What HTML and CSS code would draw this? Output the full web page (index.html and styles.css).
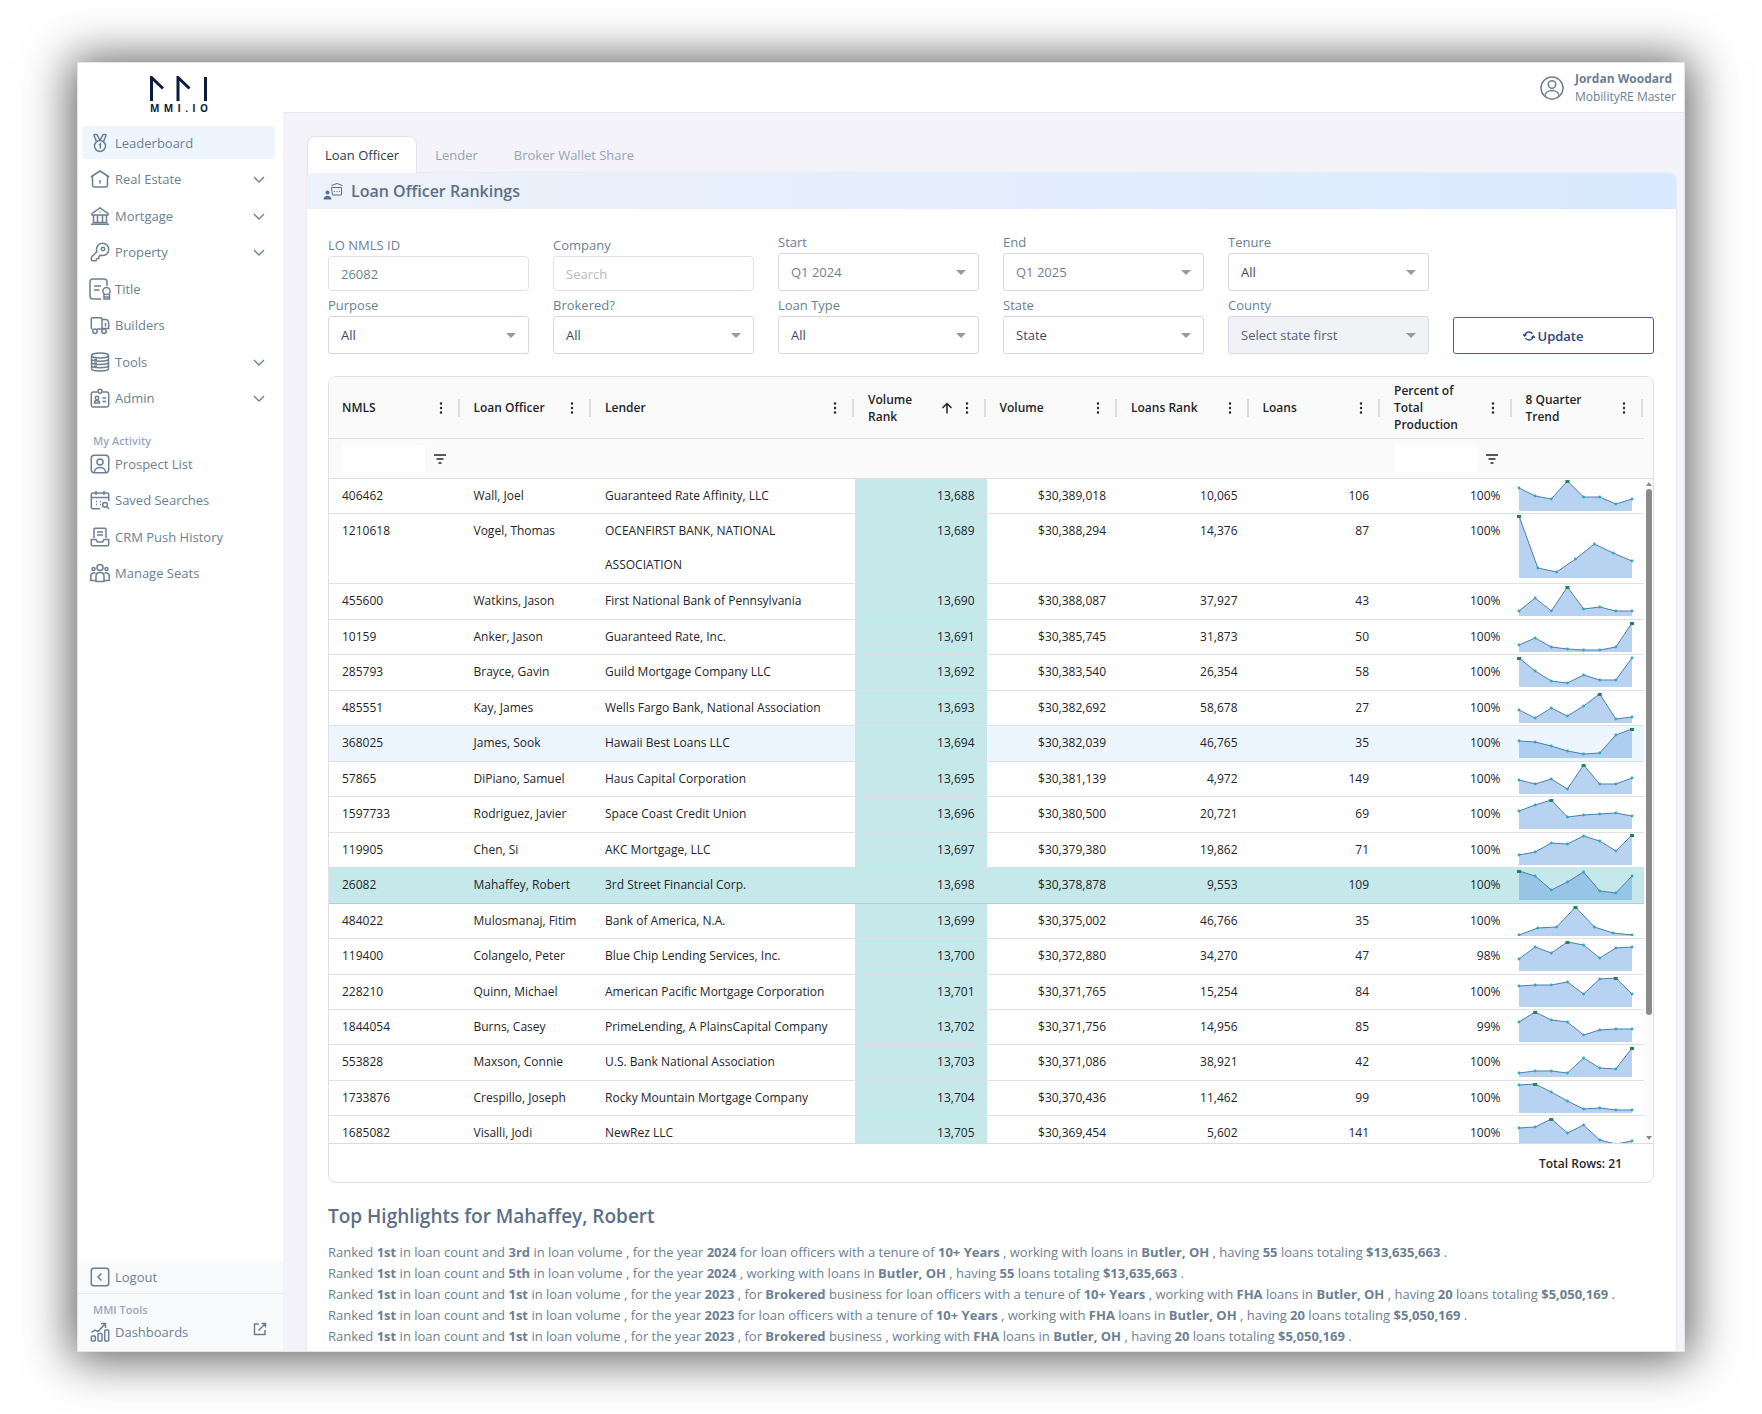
FILE: index.html
```html
<!DOCTYPE html>
<html lang="en">
<head>
    <meta charset="UTF-8">
    <meta name="viewport" content="width=device-width, initial-scale=1.0">
    <title>MMI - Loan Officer Rankings</title>
    <link rel="stylesheet" href="styles.css">
</head>
<body>

<!-- Shared icons -->
<svg class="sprite" aria-hidden="true">
    <symbol id="chevron" viewBox="0 0 12 12"><path d="M1 4l5 5 5-5"/></symbol>
    <symbol id="dots" viewBox="0 0 12 12"><circle cx="6" cy="1.500" r="1.200"/><circle cx="6" cy="6" r="1.200"/><circle cx="6" cy="10.500" r="1.200"/></symbol>
    <symbol id="filter" viewBox="0 0 14 12"><path d="M1 2h12M3.500 6h7M5.500 10h3"/></symbol>
</svg>

<div class="window">
    <aside class="sidebar">
        <a href="#" class="logo" aria-label="MMI.IO">
            <svg class="logo-mark" viewBox="0 0 58 25"><path d="M1.500 25V1.500L13 12.500M28 25V1.500L39.500 12.500M55.500 1v24"/></svg>
            <span class="logo-text"><span>M</span><span>M</span><span>I</span><span>.</span><span>I</span><span>O</span></span>
        </a>

        <nav class="nav nav-main">
            <a href="#" class="nav-item active">
                <svg class="icon" viewBox="0 0 20 20"><circle cx="10" cy="13" r="5.500"/><path d="M6.500 8.500L4 2.500q-.3-1 .7-1h1.600q.7 0 1 .7L10 7.500M13.500 8.500L16 2.500q.3-1-.7-1h-1.600q-.7 0-1 .7L10 7.500M9 12l1.300-1v4.500"/></svg>
                <span>Leaderboard</span>
            </a>
            <a href="#" class="nav-item">
                <svg class="icon" viewBox="0 0 20 20"><path d="M.8 8L10 2l9.200 6M2.500 7v9q0 2 2 2h11q2 0 2-2V7M10 11v3.500"/></svg>
                <span>Real Estate</span>
                <svg class="chevron"><use href="#chevron"/></svg>
            </a>
            <a href="#" class="nav-item">
                <svg class="icon" viewBox="0 0 20 20"><path d="M2 7.500L10 2l8 5.500V9H2zM1 18.300h18M2.500 16.500h15M3.500 9v7.500M7.500 9v7.500M12.500 9v7.500M16.500 9v7.500M10 5.500v1"/></svg>
                <span>Mortgage</span>
                <svg class="chevron"><use href="#chevron"/></svg>
            </a>
            <a href="#" class="nav-item">
                <svg class="icon" viewBox="0 0 20 20"><path d="M6.800 9.800C5.500 5 8.500 1.300 12.500 1.300c3.500 0 6.200 2.700 6.200 6.200 0 4-3.700 7-8.200 5.700L9 14.500l-.3 2-2.200.3-.5 2H3q-1.700 0-1.700-1.700v-1.300q0-.6.500-1z"/><circle cx="13" cy="7" r="1.700"/></svg>
                <span>Property</span>
                <svg class="chevron"><use href="#chevron"/></svg>
            </a>
            <a href="#" class="nav-item">
                <svg class="icon icon-lg" viewBox="0 0 22 22"><path d="M12 21H4q-3 0-3-3V4q0-3 3-3h11q3 0 3 3v4M5 8h7M5 12h5.500M15 16v5h5.500v-5M15 19h5"/><circle cx="17.500" cy="13" r="3.600"/></svg>
                <span>Title</span>
            </a>
            <a href="#" class="nav-item">
                <svg class="icon" viewBox="0 0 20 20"><path d="M2.500 14q-1.200 0-1.200-1.200V4q0-1.200 1.200-1.200h8.300Q12 2.800 12 4v10H7M12 4.500h3.500q3.200 0 3.200 4.500v4.500H12M15.500 8v3.500"/><circle cx="5" cy="16.300" r="2.200"/><circle cx="14" cy="16.300" r="2.200"/></svg>
                <span>Builders</span>
            </a>
            <a href="#" class="nav-item">
                <svg class="icon" viewBox="0 0 20 20"><ellipse cx="10" cy="3.500" rx="8.500" ry="2.500"/><path d="M1.500 3.500v13c0 3.300 17 3.300 17 0v-13M1.500 6.800c0 3.300 17 3.300 17 0M1.500 10c0 3.300 17 3.300 17 0M1.500 13.300c0 3.300 17 3.300 17 0M4 7.500h3M4 11h3M4 14.300h3"/></svg>
                <span>Tools</span>
                <svg class="chevron"><use href="#chevron"/></svg>
            </a>
            <a href="#" class="nav-item">
                <svg class="icon" viewBox="0 0 20 20"><path d="M7.500 4H3Q1.300 4 1.300 5.700v11.600Q1.300 19 3 19h14q1.700 0 1.700-1.700V5.700Q18.700 4 17 4h-4.500M12.500 10H16M12.500 13.500H16M4.500 15q0-2.500 2.500-2.500T9.500 15z"/><circle cx="10" cy="3.300" r="2"/><circle cx="7" cy="10" r="1.700"/></svg>
                <span>Admin</span>
                <svg class="chevron"><use href="#chevron"/></svg>
            </a>
        </nav>

        <h2 class="nav-heading">My Activity</h2>
        <nav class="nav nav-activity">
            <a href="#" class="nav-item">
                <svg class="icon" viewBox="0 0 20 20"><rect x="1.300" y="1.300" width="17.400" height="17.400" rx="3"/><circle cx="10" cy="8" r="3"/><path d="M4.500 18c0-6 11-6 11 0"/></svg>
                <span>Prospect List</span>
            </a>
            <a href="#" class="nav-item">
                <svg class="icon" viewBox="0 0 20 20"><path d="M10 18.700H3q-1.700 0-1.700-1.700V4.500Q1.300 3 3 3h14q1.700 0 1.700 1.500V11M1.300 7.500h17.400M6 1v4M14 1v4M6 11.500h1M10 11.500h1M6 14.500h1M10 14.500h1M17 17l2 2"/><circle cx="15" cy="14.800" r="2.400"/></svg>
                <span>Saved Searches</span>
            </a>
            <a href="#" class="nav-item">
                <svg class="icon" viewBox="0 0 20 20"><path d="M4 11V2.500Q4 1.300 5.200 1.300h9.600q1.200 0 1.200 1.200V11M7 5h6M7 8h6M1.300 12.500H6l1.500 2.500h5l1.500-2.500h4.700v5q0 1.200-1.200 1.200h-15q-1.200 0-1.200-1.200z"/></svg>
                <span>CRM Push History</span>
            </a>
            <a href="#" class="nav-item">
                <svg class="icon" viewBox="0 0 20 20"><circle cx="10" cy="4.500" r="3"/><circle cx="3.500" cy="6" r="1.500"/><circle cx="16.500" cy="6" r="1.500"/><path d="M6 18.500V13q0-3.500 4-3.500t4 3.500v5.500zM6 17.500H.8V13q0-3 3-3h1.700M14 17.500h5.200V13q0-3-3-3h-1.700"/></svg>
                <span>Manage Seats</span>
            </a>
        </nav>

        <div class="sidebar-footer">
            <a href="#" class="nav-item logout">
                <svg class="icon" viewBox="0 0 20 20"><rect x="1.300" y="1.300" width="17.400" height="17.400" rx="2.500"/><path d="M11.500 6.500L8 10l3.500 3.500"/></svg>
                <span>Logout</span>
            </a>
            <h2 class="nav-heading">MMI Tools</h2>
            <a href="#" class="nav-item dashboards">
                <svg class="icon" viewBox="0 0 20 20"><rect x="1.300" y="14" width="4" height="5" rx="1"/><rect x="8" y="11.500" width="4" height="7.500" rx="1"/><rect x="14.700" y="8" width="4" height="11" rx="1"/><path d="M1.500 10.500L5 8l3 1.500 7-7.500M11 1.500h4.500V6"/></svg>
                <span>Dashboards</span>
                <svg class="external" viewBox="0 0 14 14"><path d="M6 2H1.500v10.500H12V8M8.500 1.500h4v4M12.500 1.500L5.500 8.500"/></svg>
            </a>
        </div>
    </aside>

    <div class="page">
        <header class="topbar">
            <svg class="avatar" viewBox="0 0 24 24"><circle cx="12" cy="12" r="11"/><circle cx="12" cy="8.500" r="3.800"/><path d="M5 20c0-7.500 14-7.500 14 0"/></svg>
            <div class="user">
                <strong>Jordan Woodard</strong>
                <span>MobilityRE Master</span>
            </div>
        </header>

        <main class="content">
            <div class="tabs">
                <button class="tab selected">Loan Officer</button>
                <button class="tab">Lender</button>
                <button class="tab">Broker Wallet Share</button>
            </div>

            <section class="panel">
                <div class="panel-header">
                    <svg class="panel-icon" viewBox="0 0 20 18"><path class="line" d="M8.500 3.500L14 1.500l5.500 2M8.500 5.500h10V13h-9zM11 9.500h1M13.500 9.500h1M16 9.500h1"/><circle cx="4.500" cy="10.500" r="2"/><path d="M.5 17.500c0-5 8-5 8 0z"/></svg>
                    <h1>Loan Officer Rankings</h1>
                </div>

                <form class="filters" onsubmit="return false">
                    <div class="field">
                        <label for="nmls_id">LO NMLS ID</label>
                        <input type="text" id="nmls_id" value="26082">
                    </div>
                    <div class="field">
                        <label for="company">Company</label>
                        <input type="text" id="company" placeholder="Search">
                    </div>
                    <div class="field">
                        <label for="start">Start</label>
                        <div class="select muted"><select id="start"><option>Q1 2024</option></select></div>
                    </div>
                    <div class="field">
                        <label for="end">End</label>
                        <div class="select muted"><select id="end"><option>Q1 2025</option></select></div>
                    </div>
                    <div class="field">
                        <label for="tenure">Tenure</label>
                        <div class="select"><select id="tenure"><option>All</option></select></div>
                    </div>
                    <div class="field first">
                        <label for="purpose">Purpose</label>
                        <div class="select"><select id="purpose"><option>All</option></select></div>
                    </div>
                    <div class="field">
                        <label for="brokered">Brokered?</label>
                        <div class="select"><select id="brokered"><option>All</option></select></div>
                    </div>
                    <div class="field">
                        <label for="loan_type">Loan Type</label>
                        <div class="select"><select id="loan_type"><option>All</option></select></div>
                    </div>
                    <div class="field">
                        <label for="state">State</label>
                        <div class="select"><select id="state"><option>State</option></select></div>
                    </div>
                    <div class="field">
                        <label for="county">County</label>
                        <div class="select"><select id="county" disabled><option>Select state first</option></select></div>
                    </div>
                    <button class="update">
                        <svg viewBox="0 0 14 14"><path d="M2 6.500a5 5 0 0 1 9-2M12 7.500a5 5 0 0 1-9 2M0 5l2 2 2-2M10 9l2-2 2 2"/></svg>Update
                    </button>
                </form>

                <div class="grid">
                    <div class="grid-view">
                        <div class="grid-rows">
                            <table>
                                <colgroup>
                                    <col><col><col class="wide"><col><col><col><col><col><col>
                                </colgroup>
                                <thead>
                                    <tr class="titles" id="titles"></tr>
                                    <tr class="search">
                                        <td><div class="cell"><input type="text" aria-label="Filter NMLS"><svg class="funnel"><use href="#filter"/></svg></div></td>
                                        <td></td><td></td><td></td><td></td><td></td><td></td>
                                        <td><div class="cell"><input type="text" aria-label="Filter Percent of Total Production"><svg class="funnel"><use href="#filter"/></svg></div></td>
                                        <td></td>
                                    </tr>
                                </thead>
                                <tbody id="rows"></tbody>
                            </table>
                        </div>
                        <div class="scrollbar">
                            <div class="scrollbar-head"></div>
                            <div class="arrow-up"></div>
                            <div class="thumb"></div>
                            <div class="arrow-down"></div>
                        </div>
                    </div>
                    <div class="grid-footer">Total Rows: 21</div>
                </div>

                <h2 class="highlights-title">Top Highlights for Mahaffey, Robert</h2>
                <div class="highlights">
                    <p>Ranked <b>1st</b> in loan count and <b>3rd</b> in loan volume , for the year <b>2024</b> for loan officers with a tenure of <b>10+ Years</b> , working with loans in <b>Butler, OH</b> , having <b>55</b> loans totaling <b>$13,635,663</b> .</p>
                    <p>Ranked <b>1st</b> in loan count and <b>5th</b> in loan volume , for the year <b>2024</b> , working with loans in <b>Butler, OH</b> , having <b>55</b> loans totaling <b>$13,635,663</b> .</p>
                    <p>Ranked <b>1st</b> in loan count and <b>1st</b> in loan volume , for the year <b>2023</b> , for <b>Brokered</b> business for loan officers with a tenure of <b>10+ Years</b> , working with <b>FHA</b> loans in <b>Butler, OH</b> , having <b>20</b> loans totaling <b>$5,050,169</b> .</p>
                    <p>Ranked <b>1st</b> in loan count and <b>1st</b> in loan volume , for the year <b>2023</b> for loan officers with a tenure of <b>10+ Years</b> , working with <b>FHA</b> loans in <b>Butler, OH</b> , having <b>20</b> loans totaling <b>$5,050,169</b> .</p>
                    <p>Ranked <b>1st</b> in loan count and <b>1st</b> in loan volume , for the year <b>2023</b> , for <b>Brokered</b> business , working with <b>FHA</b> loans in <b>Butler, OH</b> , having <b>20</b> loans totaling <b>$5,050,169</b> .</p>
                </div>
            </section>
        </main>
    </div>
</div>

<script>
    let titles = ['NMLS', 'Loan Officer', 'Lender', 'Volume Rank', 'Volume', 'Loans Rank', 'Loans', 'Percent of Total Production', '8 Quarter Trend'];

    // nmls, officer, lender, volume rank, volume, loans rank, loans, percent, trend
    let rows = [
        ['406462', 'Wall, Joel', 'Guaranteed Rate Affinity, LLC', '13,688', '$30,389,018', '10,065', '106', '100%', [23,15,12,30,14,14,7,12]],
        ['1210618', 'Vogel, Thomas', 'OCEANFIRST BANK, NATIONAL ASSOCIATION', '13,689', '$30,388,294', '14,376', '87', '100%', [62,10,6,19,34,25,17]],
        ['455600', 'Watkins, Jason', 'First National Bank of Pennsylvania', '13,690', '$30,388,087', '37,927', '43', '100%', [5,18,5,29,7,9,5,5]],
        ['10159', 'Anker, Jason', 'Guaranteed Rate, Inc.', '13,691', '$30,385,745', '31,873', '50', '100%', [7,14,5,3,2,2,5,29]],
        ['285793', 'Brayce, Gavin', 'Guild Mortgage Company LLC', '13,692', '$30,383,540', '26,354', '58', '100%', [29,16,6,4,12,7,7,29]],
        ['485551', 'Kay, James', 'Wells Fargo Bank, National Association', '13,693', '$30,382,692', '58,678', '27', '100%', [13,5,15,7,17,29,4,6]],
        ['368025', 'James, Sook', 'Hawaii Best Loans LLC', '13,694', '$30,382,039', '46,765', '35', '100%', [17,16,12,7,4,5,23,29]],
        ['57865', 'DiPiano, Samuel', 'Haus Capital Corporation', '13,695', '$30,381,139', '4,972', '149', '100%', [14,10,15,5,29,10,10,16]],
        ['1597733', 'Rodriguez, Javier', 'Space Coast Credit Union', '13,696', '$30,380,500', '20,721', '69', '100%', [18,24,29,12,14,15,16,13]],
        ['119905', 'Chen, Si', 'AKC Mortgage, LLC', '13,697', '$30,379,380', '19,862', '71', '100%', [10,13,22,21,29,24,14,30]],
        ['26082', 'Mahaffey, Robert', '3rd Street Financial Corp.', '13,698', '$30,378,878', '9,553', '109', '100%', [29,24,10,18,28,9,7,24]],
        ['484022', 'Mulosmanaj, Fitim', 'Bank of America, N.A.', '13,699', '$30,375,002', '46,766', '35', '100%', [1,8,9,29,9,3,1]],
        ['119400', 'Colangelo, Peter', 'Blue Chip Lending Services, Inc.', '13,700', '$30,372,880', '34,270', '47', '98%', [12,24,18,29,26,13,23,24]],
        ['228210', 'Quinn, Michael', 'American Pacific Mortgage Corporation', '13,701', '$30,371,765', '15,254', '84', '100%', [21,22,22,25,13,28,29,13]],
        ['1844054', 'Burns, Casey', 'PrimeLending, A PlainsCapital Company', '13,702', '$30,371,756', '14,956', '85', '99%', [20,30,22,20,7,12,13,13]],
        ['553828', 'Maxson, Connie', 'U.S. Bank National Association', '13,703', '$30,371,086', '38,921', '42', '100%', [4,6,6,4,19,9,8,29]],
        ['1733876', 'Crespillo, Joseph', 'Rocky Mountain Mortgage Company', '13,704', '$30,370,436', '11,462', '99', '100%', [28,29,21,12,4,5,3,3]],
        ['1685082', 'Visalli, Jodi', 'NewRez LLC', '13,705', '$30,369,454', '5,602', '141', '100%', [20,21,29,15,23,8,4,7]]
    ];

    // Area chart with a dot per quarter, the best quarter gets a bigger green one
    function sparkline(values) {
        let max = Math.max(...values);
        let height = max > 40 ? 64 : 32;
        let step = 113 / (values.length - 1);
        let best = values.indexOf(max);
        let points = values.map((v, i) => [2 + i * step, height - v]);
        let line = points.map(p => p.join(',')).join(' ');
        let dots = points.map((p, i) => i === best
            ? `<rect class="best" x="${p[0] - 2}" y="${p[1] - 1}" width="4" height="3"/>`
            : `<circle cx="${p[0]}" cy="${p[1]}" r="1.400"/>`).join('');
        return `<svg class="spark" viewBox="0 0 117 ${height}" width="117" height="${height}">
            <polygon points="2,${height} ${line} 115,${height}"/><polyline points="${line}"/>${dots}</svg>`;
    }

    document.getElementById('titles').innerHTML = titles.map(t => `<th scope="col"><div class="cell"><span>${t}</span>`
        + (t === 'Volume Rank' ? '<svg class="sort" viewBox="0 0 12 12"><path d="M6 11.500V1.500M1.500 6L6 1.500 10.500 6"/></svg>' : '')
        + '<svg class="dots"><use href="#dots"/></svg></div></th>').join('');

    document.getElementById('rows').innerHTML = rows.map(r => {
        let state = r[0] === '26082' ? 'current' : r[0] === '368025' ? 'hover' : '';
        return `<tr class="${state}">` + r.map((c, i) => {
            if (i === 8) return `<td class="trend">${sparkline(c)}</td>`;
            return `<td class="${i > 2 ? 'num' : ''}${i === 3 ? ' rank' : ''}">${c}</td>`;
        }).join('') + '</tr>';
    }).join('');
</script>

</body>
</html>
```
FILE: styles.css
```css
* {
    box-sizing: border-box;
}

body {
    margin: 0;
    padding: 62px 77px;
    background: #fff;
    color: #6c7f93;
    font-family: "Open Sans", "Noto Sans", sans-serif;
    font-size: 13px;
}

h1, h2, p {
    margin: 0;
}

a {
    color: inherit;
    text-decoration: none;
}

input, select, button {
    font: inherit;
    color: inherit;
}

svg {
    fill: none;
    stroke: currentColor;
    flex: none;
}

.sprite {
    display: none;
}

.window {
    display: flex;
    min-height: calc(100vh - 125px);
    overflow: hidden;
    background: #fff;
    border: 1px solid #e4e5e8;
    box-shadow: 0 2px 44px 6px rgba(0, 0, 0, 0.62);
}

/* Sidebar */
.sidebar {
    display: flex;
    flex-direction: column;
    flex: none;
    width: 205px;
}

.logo {
    width: 58px;
    margin: 13px 0 12px 72px;
    color: #0d1b3f;
}

.logo-mark {
    display: block;
    width: 58px;
    height: 25px;
    stroke-width: 3;
}

.logo-text {
    display: flex;
    justify-content: space-between;
    margin-top: 2px;
    font-size: 10px;
    font-weight: 700;
    line-height: 11px;
}

.nav {
    display: grid;
    grid-auto-rows: 1fr;
    padding: 0 8px 0 4px;
}

.nav-main {
    height: 292px;
}

.nav-activity {
    height: 146px;
}

.nav-item {
    display: flex;
    align-items: center;
    gap: 5px;
    height: 33px;
    padding: 0 10px 0 8px;
    border-radius: 4px;
    font-size: 13px;
}

.nav-item.active {
    background: #eef5ff;
}

.icon {
    width: 20px;
    height: 20px;
    stroke-width: 1.500;
}

.icon-lg {
    width: 22px;
    height: 22px;
    margin: 0 -1px;
}

.chevron {
    width: 12px;
    height: 12px;
    margin-left: auto;
    stroke-width: 1.300;
}

.nav-heading {
    margin: 16px 0 0 15px;
    color: #9aa8bf;
    font-size: 11px;
    font-weight: 600;
    line-height: 13px;
}

.sidebar-footer {
    margin-top: auto;
    height: 90px;
    background: #f8fafc;
}

.sidebar-footer .nav-item {
    padding-left: 12px;
}

.logout {
    border-bottom: 1px solid #e8ebef;
    border-radius: 0;
}

.sidebar-footer .nav-heading {
    margin-top: 9px;
}

.sidebar-footer .dashboards {
    height: 31px;
    padding-right: 16px;
}

.external {
    width: 14px;
    height: 14px;
    margin: 0 0 6px auto;
    stroke-width: 1.500;
}

/* Top bar */
.page {
    flex: 1;
    min-width: 0;
    background: #f3f3f9;
}

.topbar {
    display: flex;
    justify-content: flex-end;
    align-items: center;
    gap: 11px;
    height: 50px;
    padding-right: 8px;
    background: #fff;
    border-bottom: 1px solid #e9e9ef;
}

.avatar {
    width: 24px;
    height: 24px;
    stroke-width: 1.500;
}

.user strong, .user span {
    display: block;
    font-size: 12px;
    line-height: 18px;
}

/* Tabs and panel */
.content {
    padding: 23px 8px 0 24px;
}

.tabs {
    display: flex;
    height: 37px;
}

.tab {
    padding: 0 17px;
    background: none;
    border: 1px solid transparent;
    border-bottom: 0;
    border-radius: 8px 8px 0 0;
    color: #98a3b0;
    font-size: 13px;
}

.tab.selected {
    background: #fff;
    border-color: #e3e5ee;
    color: #2f3b4c;
}

.panel {
    padding-bottom: 4px;
    background: #fff;
    border-radius: 0 8px 0 0;
    box-shadow: 0 0 2px #d9dbe4;
}

.panel-header {
    display: flex;
    align-items: center;
    gap: 8px;
    height: 36px;
    padding-left: 16px;
    background: linear-gradient(90deg, #eef2fa, #d9e9ff);
    border-radius: 0 8px 0 0;
    color: #5b6f88;
}

.panel-header h1 {
    font-size: 16px;
    font-weight: 600;
}

.panel-icon {
    width: 20px;
    height: 18px;
    fill: currentColor;
    stroke: none;
}

.panel-icon .line {
    fill: none;
    stroke: currentColor;
}

/* Filters */
.filters {
    display: grid;
    grid-template-columns: repeat(6, 1fr);
    align-items: end;
    gap: 4px 24px;
    margin: 23px 22px 22px 21px;
}

.field.first {
    grid-column-start: 1;
}

.field label {
    display: block;
    font-size: 13px;
    line-height: 21px;
}

.field input {
    display: block;
    width: 100%;
    height: 35px;
    padding: 0 12px;
    border: 1px solid #dfe2ea;
    border-radius: 4px;
    background: #fff;
}

.field input::placeholder {
    color: #b4bcc6;
}

.select {
    position: relative;
    color: #3d4663;
}

.select.muted {
    color: #73808f;
}

.select select {
    display: block;
    width: 100%;
    height: 38px;
    padding: 0 12px;
    appearance: none;
    background: #fff;
    border: 1px solid #d5d8e0;
    border-radius: 3px;
}

.select select:disabled {
    background: #f1f2f5;
    color: #56607a;
    opacity: 1;
}

.select::after {
    content: "";
    position: absolute;
    top: 17px;
    right: 13px;
    border: 5px solid transparent;
    border-top-color: #999;
    border-bottom: 0;
}

.update {
    display: flex;
    justify-content: center;
    align-items: center;
    gap: 2px;
    height: 37px;
    background: #fff;
    border: 1px solid #405cb8;
    border-radius: 3px;
    color: #2a4287;
    font-weight: 600;
}

.update svg {
    width: 12px;
    height: 12px;
    stroke-width: 1.500;
}

/* Rankings grid */
.grid {
    margin: 0 22px 0 21px;
    overflow: hidden;
    border: 1px solid #dfe1e2;
    border-radius: 8px;
    color: #1f2529;
    font-size: 12px;
}

.grid-view {
    display: flex;
    height: 767px;
    border-bottom: 1px solid #dadcdd;
}

.grid-rows {
    flex: 1;
    overflow: hidden;
}

.grid table {
    width: 100%;
    height: 775px;
    table-layout: fixed;
    border-collapse: separate;
    border-spacing: 0;
}

.grid col {
    width: 10%;
}

.grid col.wide {
    width: 20%;
}

.grid th, .grid td {
    padding: 0 12px 0 13px;
    border-bottom: 1px solid #dfe1e3;
    text-align: left;
    vertical-align: top;
}

.grid thead th, .grid thead td {
    padding-right: 14px;
    background: #fafafa;
    vertical-align: middle;
}

.titles {
    height: 62px;
}

.search {
    height: 40px;
}

.grid thead .cell {
    display: flex;
    align-items: center;
    gap: 8px;
}

.grid th .cell {
    position: relative;
    font-weight: 600;
    line-height: 17px;
}

.grid th span {
    flex: 1;
}

.grid th .cell::after {
    content: "";
    position: absolute;
    top: calc(50% - 9px);
    right: -13px;
    height: 18px;
    border-right: 2px solid #dcdddd;
}

.dots {
    width: 12px;
    height: 12px;
    fill: currentColor;
    stroke: none;
}

.sort {
    width: 12px;
    height: 12px;
    stroke-width: 1.500;
}

.search input {
    flex: 1;
    min-width: 0;
    height: 27px;
    padding: 0 6px;
    background: #fff;
    border: 0;
    border-radius: 4px;
}

.funnel {
    width: 14px;
    height: 12px;
    stroke-width: 1.500;
}

.grid tbody td {
    height: 35px;
    line-height: 34px;
}

.grid .num {
    text-align: right;
}

.grid .rank {
    background: #c5e8eb;
}

.grid .hover td:not(.rank) {
    background: #edf6ff;
}

.grid .current td {
    background: #c5e8eb;
    border-bottom-color: #a9d2da;
}

.grid .trend {
    padding: 0 0 0 4px;
    line-height: 0;
}

.spark polygon {
    fill: rgba(86, 148, 221, 0.42);
    stroke: none;
}

.spark polyline {
    stroke: #4f7cb0;
}

.spark circle {
    fill: #2ba9c4;
    stroke: none;
}

.spark .best {
    fill: #1a8754;
    stroke: none;
}

.scrollbar {
    display: flex;
    flex-direction: column;
    align-items: center;
    width: 9px;
    background: #fbfbfb;
}

.scrollbar-head {
    width: 100%;
    height: 102px;
    background: #fafafa;
    border-bottom: 1px solid #dfe1e3;
}

.arrow-up {
    margin: 3px 0;
    border: 3px solid transparent;
    border-top: 0;
    border-bottom: 4px solid #8b8b8b;
}

.thumb {
    width: 6px;
    height: 526px;
    background: #8b8b8b;
    border-radius: 3px;
}

.arrow-down {
    margin: auto 0 3px;
    border: 3px solid transparent;
    border-top: 4px solid #8b8b8b;
    border-bottom: 0;
}

.grid-footer {
    padding: 2px 31px 0 0;
    font-weight: 600;
    line-height: 36px;
    text-align: right;
}

/* Highlights */
.highlights-title {
    margin: 20px 22px 13px 21px;
    color: #5b6f88;
    font-size: 19px;
    font-weight: 600;
    line-height: 26px;
}

.highlights {
    margin: 0 22px 0 21px;
}

.highlights p {
    font-size: 13px;
    line-height: 21px;
}
```
